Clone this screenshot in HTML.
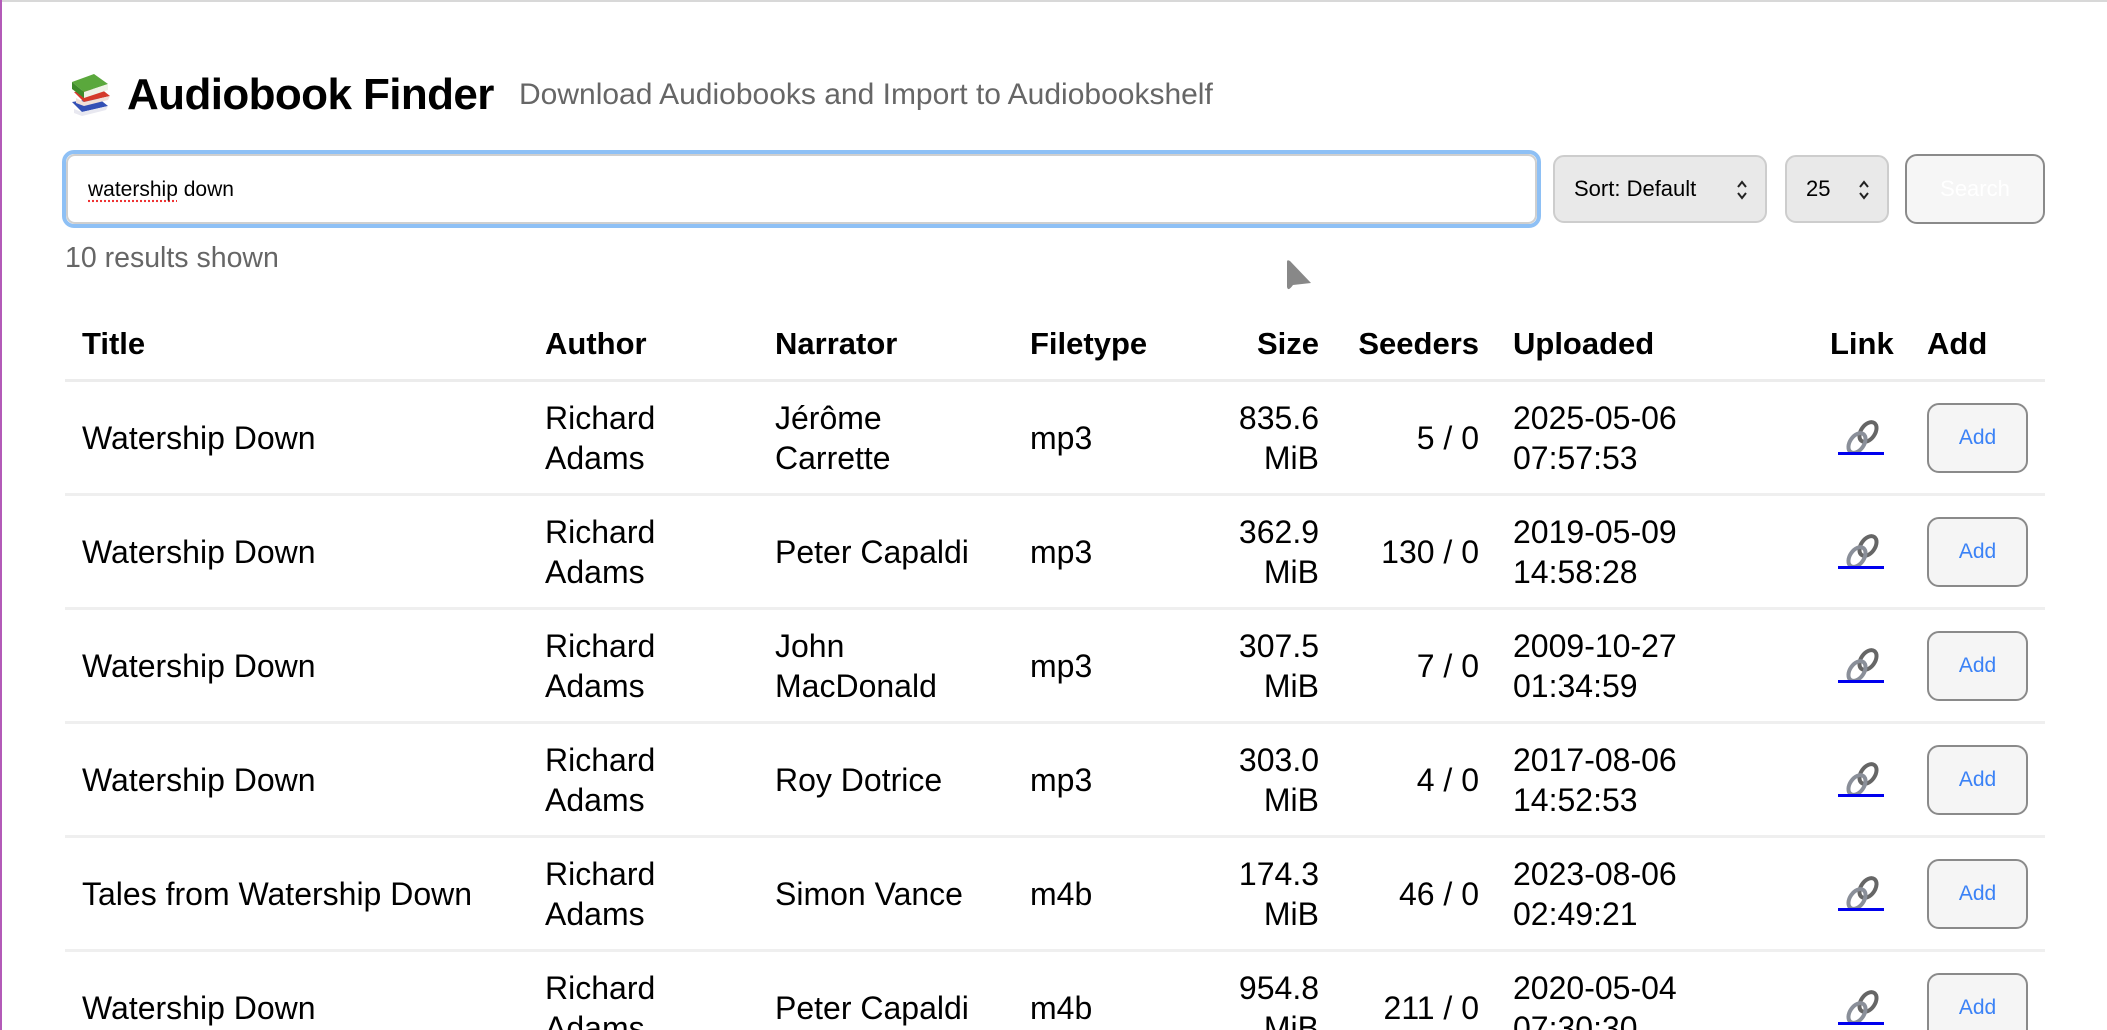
<!DOCTYPE html>
<html><head><meta charset="utf-8"><style>
html,body{margin:0;padding:0;width:2107px;height:1030px;overflow:hidden;background:#fff;font-family:"Liberation Sans",Arial,sans-serif;color:#000}
body{position:relative}
.abs{position:absolute}
h1{position:absolute;left:127px;top:65px;margin:0;font-size:44px;font-weight:bold;line-height:60px;letter-spacing:-0.6px}
.sub{left:519px;top:75px;font-size:30px;color:#666;line-height:40px}
.input{left:62px;top:150px;width:1479px;height:78px;box-sizing:border-box;border:4px solid #8ec0f5;border-radius:12px;background:#fff}
.input .in{position:absolute;inset:0;border:2px solid #cfcfcf;border-radius:9px}
.input span{position:absolute;left:22px;top:23px;font-size:21px;line-height:26px}
.input span u{text-decoration:underline dotted #e33;text-underline-offset:4px}
.sel{top:155px;height:68px;box-sizing:border-box;background:#e9e9e9;border:2px solid #cdcdcd;border-radius:11px;font-size:22px;line-height:64px}
.btn{left:1905px;top:154px;width:140px;height:70px;box-sizing:border-box;background:#f6f6f6;border:2px solid #8a8a8a;border-radius:12px;color:#fff;font-size:22px;text-align:center;line-height:66px}
.res{left:65px;top:241px;font-size:28.5px;color:#666;line-height:34px}
table{position:absolute;left:65px;top:309px;border-collapse:collapse;table-layout:fixed;width:1980px}
th{font-size:31px;font-weight:bold;text-align:left;height:70px;padding:0 17px;border-bottom:3px solid #ececec;vertical-align:middle;line-height:40px}
td{font-size:32px;line-height:40px;padding:0 17px;height:111px;border-bottom:3px solid #efefef;vertical-align:middle}
.r{text-align:right}
.add{display:block;width:101px;height:70px;box-sizing:border-box;border:2px solid #8a8a8a;border-radius:12px;background:#f5f5f5;color:#3b82f6;font-size:21px;text-align:center;line-height:66px}
</style></head><body>
<div class="abs" style="left:0;top:0;width:2107px;height:2px;background:#d8d8d8"></div>
<div class="abs" style="left:0;top:0;width:2px;height:1030px;background:#b35ab8"></div>
<svg class="abs" style="left:68px;top:72px" width="46" height="46" viewBox="0 0 46 46">
<path d="M4 30 L30 26 L40 34 L14 40 Z" fill="#3350b5"/><path d="M6 37 L14 40 L40 34 L38 38 L14 44 L6 41Z" fill="#e8e8f0"/>
<path d="M6 20 L32 16 L42 24 L16 30 Z" fill="#d43a2a"/><path d="M8 26 L16 30 L42 24 L40 28 L16 34 L8 31Z" fill="#f0e0d8"/>
<path d="M4 10 L26 2 L40 12 L16 20 Z" fill="#5aa83c"/><path d="M4 10 L16 20 L16 26 L4 17Z" fill="#3d8a2a"/><path d="M16 20 L40 12 L40 18 L16 26Z" fill="#eef2e6"/>
</svg>
<h1>Audiobook Finder</h1>
<div class="abs sub">Download Audiobooks and Import to Audiobookshelf</div>
<div class="abs input"><div class="in"></div><span><u>watership</u> down</span></div>
<div class="abs sel" style="left:1553px;width:214px"><span style="position:absolute;left:19px">Sort: Default</span><svg style="position:absolute;left:180px;top:22px" width="14" height="22" viewBox="0 0 14 22"><path d="M3 8 L7 3 L11 8 M3 14 L7 19 L11 14" stroke="#222" stroke-width="2" fill="none"/></svg></div>
<div class="abs sel" style="left:1785px;width:104px"><span style="position:absolute;left:19px">25</span><svg style="position:absolute;left:70px;top:22px" width="14" height="22" viewBox="0 0 14 22"><path d="M3 8 L7 3 L11 8 M3 14 L7 19 L11 14" stroke="#222" stroke-width="2" fill="none"/></svg></div>
<div class="abs btn">Search</div>
<div class="abs res">10 results shown</div>
<svg class="abs" style="left:1285px;top:259px" width="28" height="34" viewBox="0 0 28 34"><path d="M2 3 Q2 0 5 2 L26 24 L8 26 Q3 33 2 28 Z" fill="#888"/></svg>
<table>
<colgroup><col style="width:463px"><col style="width:230px"><col style="width:255px"><col style="width:158px"><col style="width:165px"><col style="width:160px"><col style="width:317px"><col style="width:97px"><col style="width:135px"></colgroup>
<tr><th>Title</th><th>Author</th><th>Narrator</th><th>Filetype</th><th class="r">Size</th><th class="r">Seeders</th><th>Uploaded</th><th>Link</th><th>Add</th></tr>
<tr><td>Watership Down</td><td>Richard Adams</td><td>Jérôme Carrette</td><td>mp3</td><td class="r">835.6 MiB</td><td class="r">5 / 0</td><td>2025-05-06 07:57:53</td><td>LINK</td><td><span class="add">Add</span></td></tr>
<tr><td>Watership Down</td><td>Richard Adams</td><td>Peter Capaldi</td><td>mp3</td><td class="r">362.9 MiB</td><td class="r">130 / 0</td><td>2019-05-09 14:58:28</td><td>LINK</td><td><span class="add">Add</span></td></tr>
<tr><td>Watership Down</td><td>Richard Adams</td><td>John MacDonald</td><td>mp3</td><td class="r">307.5 MiB</td><td class="r">7 / 0</td><td>2009-10-27 01:34:59</td><td>LINK</td><td><span class="add">Add</span></td></tr>
<tr><td>Watership Down</td><td>Richard Adams</td><td>Roy Dotrice</td><td>mp3</td><td class="r">303.0 MiB</td><td class="r">4 / 0</td><td>2017-08-06 14:52:53</td><td>LINK</td><td><span class="add">Add</span></td></tr>
<tr><td>Tales from Watership Down</td><td>Richard Adams</td><td>Simon Vance</td><td>m4b</td><td class="r">174.3 MiB</td><td class="r">46 / 0</td><td>2023-08-06 02:49:21</td><td>LINK</td><td><span class="add">Add</span></td></tr>
<tr><td>Watership Down</td><td>Richard Adams</td><td>Peter Capaldi</td><td>m4b</td><td class="r">954.8 MiB</td><td class="r">211 / 0</td><td>2020-05-04 07:30:30</td><td>LINK</td><td><span class="add">Add</span></td></tr>
</table>
<script>
var svg='<svg width="50" height="40" viewBox="0 0 50 40" style="display:block;margin-left:8px"><g fill="none" stroke-width="4"><ellipse cx="30" cy="14" rx="7" ry="11" transform="rotate(35 30 14)" stroke="#666"/><ellipse cx="19" cy="25" rx="7" ry="11" transform="rotate(35 19 25)" stroke="#8a8f99"/></g><rect x="0" y="34" width="46" height="3" fill="#0000ee"/></svg>';
document.querySelectorAll('td').forEach(function(t){if(t.textContent==='LINK')t.innerHTML=svg;});
</script>
</body></html>
